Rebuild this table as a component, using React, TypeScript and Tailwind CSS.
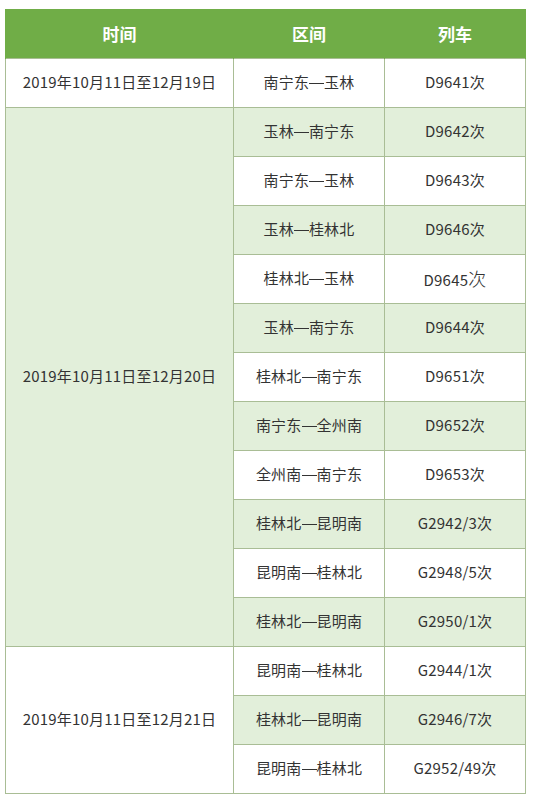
import React from 'react';

interface Train {
  route: string;
  code: string;
  serifSuffix?: boolean;
}

const groups: { period: string; bg: string; trains: Train[] }[] = [
  {
    period: '2019年10月11日至12月19日',
    bg: 'bg-white',
    trains: [{ route: '南宁东—玉林', code: 'D9641次' }],
  },
  {
    period: '2019年10月11日至12月20日',
    bg: 'bg-[#e2efda]',
    trains: [
      { route: '玉林—南宁东', code: 'D9642次' },
      { route: '南宁东—玉林', code: 'D9643次' },
      { route: '玉林—桂林北', code: 'D9646次' },
      { route: '桂林北—玉林', code: 'D9645次', serifSuffix: true },
      { route: '玉林—南宁东', code: 'D9644次' },
      { route: '桂林北—南宁东', code: 'D9651次' },
      { route: '南宁东—全州南', code: 'D9652次' },
      { route: '全州南—南宁东', code: 'D9653次' },
      { route: '桂林北—昆明南', code: 'G2942/3次' },
      { route: '昆明南—桂林北', code: 'G2948/5次' },
      { route: '桂林北—昆明南', code: 'G2950/1次' },
    ],
  },
  {
    period: '2019年10月11日至12月21日',
    bg: 'bg-white',
    trains: [
      { route: '昆明南—桂林北', code: 'G2944/1次' },
      { route: '桂林北—昆明南', code: 'G2946/7次' },
      { route: '昆明南—桂林北', code: 'G2952/49次' },
    ],
  },
];

const cell = 'border border-[#a9bd95] text-center align-middle';

// the em dash is drawn full width, as in the source table
const Route = ({ text }: { text: string }) => {
  const [from, to] = text.split('—');
  return (
    <>
      {from}
      <span className="inline-block w-[1em] align-[0.3em] border-t border-[#333]" />
      {to}
    </>
  );
};

export default function App() {
  let rowIndex = 0;
  return (
    <div className="min-h-screen bg-white pt-[9px] pl-[5px] font-['Noto_Sans_CJK_SC','Noto_Sans',sans-serif] text-[#333]">
      <table className="w-[520px] border-collapse table-fixed">
        <colgroup>
          <col className="w-[228px]" />
          <col className="w-[151px]" />
          <col className="w-[141px]" />
        </colgroup>
        <thead>
          <tr className="h-[49px] bg-[#70ad47] text-white text-[17px] font-bold">
            <th className="text-center align-middle border-x border-[#70ad47]">时间</th>
            <th className="text-center align-middle">区间</th>
            <th className="text-center align-middle border-x border-[#70ad47]">列车</th>
          </tr>
        </thead>
        <tbody className="text-[15px] tracking-[0.2px]">
          {groups.map((g) =>
            g.trains.map((t, i) => {
              const stripe = rowIndex++ % 2 === 1 ? 'bg-[#e2efda]' : 'bg-white';
              return (
                <tr key={g.period + i} className="h-[49px]">
                  {i === 0 && (
                    <td rowSpan={g.trains.length} className={`${cell} ${g.bg}`}>
                      {g.period}
                    </td>
                  )}
                  <td className={`${cell} ${stripe}`}>
                    <Route text={t.route} />
                  </td>
                  <td className={`${cell} ${stripe}`}>
                    {t.serifSuffix ? (
                      <>
                        {t.code.slice(0, -1)}
                        <span className="text-[18px] font-light">次</span>
                      </>
                    ) : (
                      t.code
                    )}
                  </td>
                </tr>
              );
            })
          )}
        </tbody>
      </table>
    </div>
  );
}
